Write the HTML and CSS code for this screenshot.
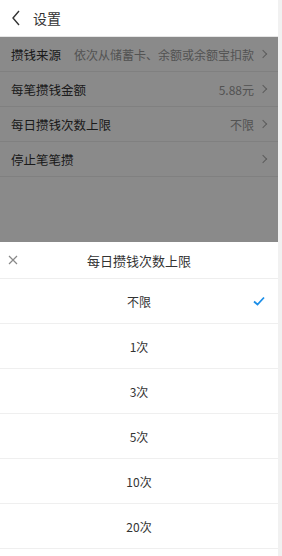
FILE: index.html
```html
<!doctype html>
<html lang="zh-CN">

<head>
    <meta charset="utf-8">
    <meta name="viewport" content="width=device-width, initial-scale=1.0">
    <title>设置</title>
    <link rel="stylesheet" href="styles.css">
</head>

<body>
    <div class="page">
        <!-- top bar -->
        <div class="topbar">
            <svg class="back" viewBox="0 0 10 16" width="10" height="16">
                <path d="M8 1 L2 8 L8 15" fill="none" stroke="#333" stroke-width="1.4" />
            </svg>
            <span class="topbar-title">设置</span>
        </div>

        <!-- settings list -->
        <div class="list">
            <div class="row">
                <span class="row-label">攒钱来源</span>
                <span class="row-value">依次从储蓄卡、余额或余额宝扣款</span>
                <span class="arrow"></span>
            </div>
            <div class="row">
                <span class="row-label">每笔攒钱金额</span>
                <span class="row-value">5.88元</span>
                <span class="arrow"></span>
            </div>
            <div class="row">
                <span class="row-label">每日攒钱次数上限</span>
                <span class="row-value">不限</span>
                <span class="arrow"></span>
            </div>
            <div class="row">
                <span class="row-label">停止笔笔攒</span>
                <span class="row-value"></span>
                <span class="arrow"></span>
            </div>
        </div>

        <!-- mask + bottom sheet -->
        <div class="mask"></div>
        <div class="sheet">
            <div class="sheet-head">
                <svg class="close" viewBox="0 0 10 10" width="10" height="10">
                    <path d="M1 1 L9 9 M9 1 L1 9" stroke="#888" stroke-width="1.2" />
                </svg>
                <span class="sheet-title">每日攒钱次数上限</span>
            </div>
            <div class="option selected">
                不限
                <svg class="check" viewBox="0 0 12 10" width="12" height="10">
                    <path d="M1 5.5 L4.5 8.5 L11 1.5" fill="none" stroke="#1b8ee8" stroke-width="1.8" />
                </svg>
            </div>
            <div class="option">1次</div>
            <div class="option">3次</div>
            <div class="option">5次</div>
            <div class="option">10次</div>
            <div class="option">20次</div>
        </div>
    </div>
</body>

</html>
```

FILE: styles.css
```css
/* base */

html {
    background: #f1f1f1;
}

body {
    margin: 0;
    font-family: "Noto Sans CJK SC", "Noto Sans", sans-serif;
    color: #333;
}

.page {
    position: relative;
    width: 278px;
    height: 556px;
    background: #fff;
    overflow: hidden;
}

/* top bar */
.topbar {
    height: 37px;
    display: flex;
    align-items: center;
    padding-left: 11px;
    gap: 12px;
    border-bottom: 1px solid #e6e6e6;
    box-sizing: border-box;
}

.topbar-title {
    font-size: 14px;
}

/* settings rows */
.row {
    height: 35px;
    display: flex;
    align-items: center;
    padding: 0 12px 0 11px;
    border-bottom: 1px solid #ececec;
    box-sizing: border-box;
    font-size: 12.5px;
}

.row-label {
    color: #333;
}

.row-value {
    margin-left: auto;
    color: #999;
    font-size: 12px;
}

.arrow {
    width: 5px;
    height: 5px;
    border-top: 1px solid #aaa;
    border-right: 1px solid #aaa;
    transform: rotate(45deg);
    margin-left: 6px;
}

/* overlay */
.mask {
    position: absolute;
    top: 37px;
    left: 0;
    right: 0;
    bottom: 0;
    background: rgba(0, 0, 0, 0.46);
}

.sheet {
    position: absolute;
    left: 0;
    right: 0;
    top: 242px;
    bottom: 0;
    background: #fff;
}

.sheet-head {
    position: relative;
    height: 36px;
    display: flex;
    align-items: center;
    justify-content: center;
    border-bottom: 1.5px solid #eee;
}

.close {
    position: absolute;
    left: 8px;
    top: 13px;
}

.sheet-title {
    font-size: 13px;
    color: #333;
}

.option {
    position: relative;
    height: 44px;
    display: flex;
    align-items: center;
    justify-content: center;
    border-bottom: 1.5px solid #efefef;
    font-size: 12px;
    color: #333;
}

.check {
    position: absolute;
    right: 13px;
    top: 17px;
}
```
